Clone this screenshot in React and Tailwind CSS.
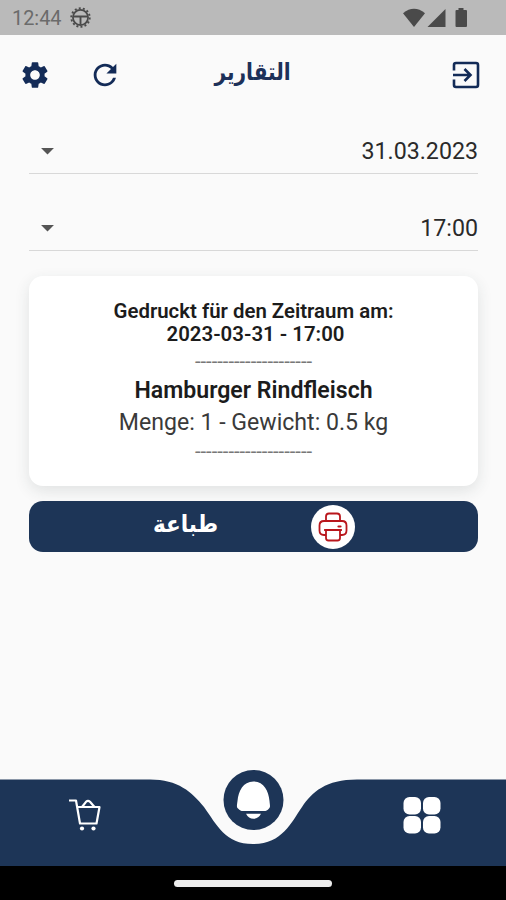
import React from 'react';
import { MdSettings, MdRefresh, MdArrowDropDown } from 'react-icons/md';

const StatusBar = () => (
    <div className="h-[35px] shrink-0 bg-[#bababa] flex items-center justify-between pl-3 pr-[37px] text-[#4a4a4a]">
        <div className="flex items-center gap-2">
            <span className="pt-[3px] text-[19.9px] leading-none text-[#6b6b6b]">12:44</span>
            <svg className="w-[21px] h-[21px]" viewBox="0 0 20 20" fill="none" stroke="currentColor">
                <circle cx="10" cy="10" r="8.8" strokeWidth="1.8" strokeDasharray="1.9 2.05" />
                <circle cx="10" cy="10" r="7.2" strokeWidth="1.7" />
                <path d="M3 9h14M10 9v8" strokeWidth="1.8" />
            </svg>
        </div>
        <svg className="w-[66px] h-5" viewBox="0 0 66 20" fill="currentColor">
            <path d="M0 5.2Q11 -3.5 22 5.2L11 19Z" />
            <path d="M24.5 19H42.5V1Z" />
            <path d="M55.5 0h5v2h2.5q1 0 1 1v15q0 1-1 1H53.5q-1 0-1-1V3q0-1 1-1h2z" />
        </svg>
    </div>
);

const SelectField = ({ value }) => (
    <div className="h-[46px] flex items-center justify-between border-b border-[#d8d8d8] pl-[3px]">
        <MdArrowDropDown className="w-[31px] h-[31px] text-[#555555]" />
        <span className="pt-0.5 text-[23.2px] leading-none text-[#2a2a2a]">{value}</span>
    </div>
);

const PrinterIcon = () => (
    <svg className="w-[30px] h-[30px]" viewBox="0 0 30 30" fill="none" stroke="#b9161c" strokeWidth="1.8" strokeLinejoin="round">
        <path d="M8 8.5V4.5Q8 1.5 11 1.5h8Q22 1.500 22 4.5v4" />
        <path d="M8 23H6Q1.5 23 1.5 18.5V13.5Q1.5 9 6 9h18q4.5 0 4.5 4.5v5Q28.5 23 24 23h-2" />
        <path d="M8 18h14v8q0 2.500-2.5 2.5h-9q-2.5 0-2.5-2.5z" />
        <path d="M6 18h18" />
        <path d="M20.500 14.500h2" strokeWidth="2.2" strokeLinecap="round" />
    </svg>
);

const BottomNav = () => (
    <div className="h-[96px] shrink-0">
        <svg className="w-full h-full" viewBox="0 0 506 96">
            <path d="M0 9.5H150C178 9.5 192 22 204 37C217 55 225 74 253 74C282 74 291 53 302 37C312 22 326 9.5 357 9.5H506V96H0Z" fill="#1d3557" />
            <circle cx="253.5" cy="30" r="30" fill="#1d3557" />
            {/* bell */}
            <path d="M253.5 11.5C243 11.500 238.500 21 237.500 31C236.800 36 236.500 37 238 38.500C240 40.500 241 41 243 41H264C266 41 267.500 40.500 269 38.500C270.500 37 270 36 269.500 31C268.500 21 264 11.500 253.5 11.5Z" fill="#fff" />
            <path d="M246 43.800H261Q258.500 48.800 253.5 48.800Q248.500 48.800 246 43.800Z" fill="#fff" />
            {/* cart */}
            <g fill="none" stroke="#fff" strokeWidth="2.2" strokeLinejoin="round">
                <path d="M69 30.5H76L80 53.5H96.500L99.500 37H77.500" />
                <path d="M82 37L86 31.800Q88 30 90 31.800L94.500 37" />
            </g>
            <circle cx="82" cy="58.5" r="2.1" fill="#fff" />
            <circle cx="93.5" cy="58.5" r="2.1" fill="#fff" />
            {/* grid */}
            <g fill="#fff">
                <rect x="403.500" y="27" width="17.500" height="17.500" rx="6" />
                <rect x="423" y="27" width="17.500" height="17.500" rx="6" />
                <rect x="403.500" y="46" width="17.500" height="17.500" rx="6" />
                <rect x="423" y="46" width="17.500" height="17.500" rx="6" />
            </g>
        </svg>
    </div>
);

const App = () => {
    return (
        <div className="w-[506px] h-[900px] flex flex-col bg-[#fafafa] overflow-hidden font-[Roboto,sans-serif]">
            <StatusBar />

            <header className="h-20 shrink-0 grid grid-cols-3 items-center pl-[19px] pr-[26px]">
                <div className="flex items-center gap-[37px] text-[#132b57]">
                    <MdSettings className="w-8 h-8" />
                    <MdRefresh className="w-[34px] h-[34px]" />
                </div>
                <h1 dir="rtl" className="pb-1.5 pr-0 pl-1.5 text-center text-[24px] leading-8 font-bold text-[#1d3159] scale-x-[0.93] font-['DejaVu_Sans_Condensed','DejaVu_Sans',sans-serif]">التقارير</h1>
                <svg className="w-7 h-7 justify-self-end text-[#132b57]" viewBox="0 0 28 28" fill="none" stroke="currentColor" strokeWidth="2.6">
                    <path d="M2 9.5V4Q2 2 4 2H24Q26 2 26 4V24Q26 26 24 26H4Q2 26 2 24V18.5" />
                    <path d="M1 14H18M12.5 8L18.5 14L12.5 20" />
                </svg>
            </header>

            <main className="flex-1 pl-[29px] pr-[28px] pt-[13px]">
                <div className="flex flex-col gap-[31px]">
                    <SelectField value="31.03.2023" />
                    <SelectField value="17:00" />
                </div>

                <div className="mt-[25px] h-[210px] rounded-[14px] bg-white shadow-[0_5px_15px_rgba(40,60,60,0.12)] pt-6 text-center text-[#1c1c1c]">
                    <p className="text-[20.4px] leading-[23px] font-semibold">
                        Gedruckt für den Zeitraum am:<br />
                        <span className="pl-1">2023-03-31 - 17:00</span>
                    </p>
                    <p className="text-[20.2px] leading-[30px] text-[#777]">---------------------</p>
                    <p className="text-[23.1px] leading-[30px] font-semibold">Hamburger Rindfleisch</p>
                    <p className="text-[23.1px] leading-[33px] text-[#3a3a3a]">Menge: 1 - Gewicht: 0.5 kg</p>
                    <p className="text-[20.2px] leading-[25px] text-[#777]">---------------------</p>
                </div>

                <button className="mt-[15px] w-full h-[51px] rounded-[14px] bg-[#1d3557] flex items-center pl-[124px] gap-[93px]">
                    <span dir="rtl" className="w-[65px] pb-1.5 whitespace-nowrap text-[24px] leading-8 font-bold text-white font-['DejaVu_Sans_Condensed','DejaVu_Sans',sans-serif]">طباعة</span>
                    <span className="w-11 h-11 rounded-full bg-white flex items-center justify-center">
                        <PrinterIcon />
                    </span>
                </button>
            </main>

            <BottomNav />
            <div className="h-[34px] shrink-0 bg-black flex items-center justify-center">
                <div className="w-[158px] h-[7px] rounded-full bg-[#ececec]"></div>
            </div>
        </div>
    );
};

export default App;
